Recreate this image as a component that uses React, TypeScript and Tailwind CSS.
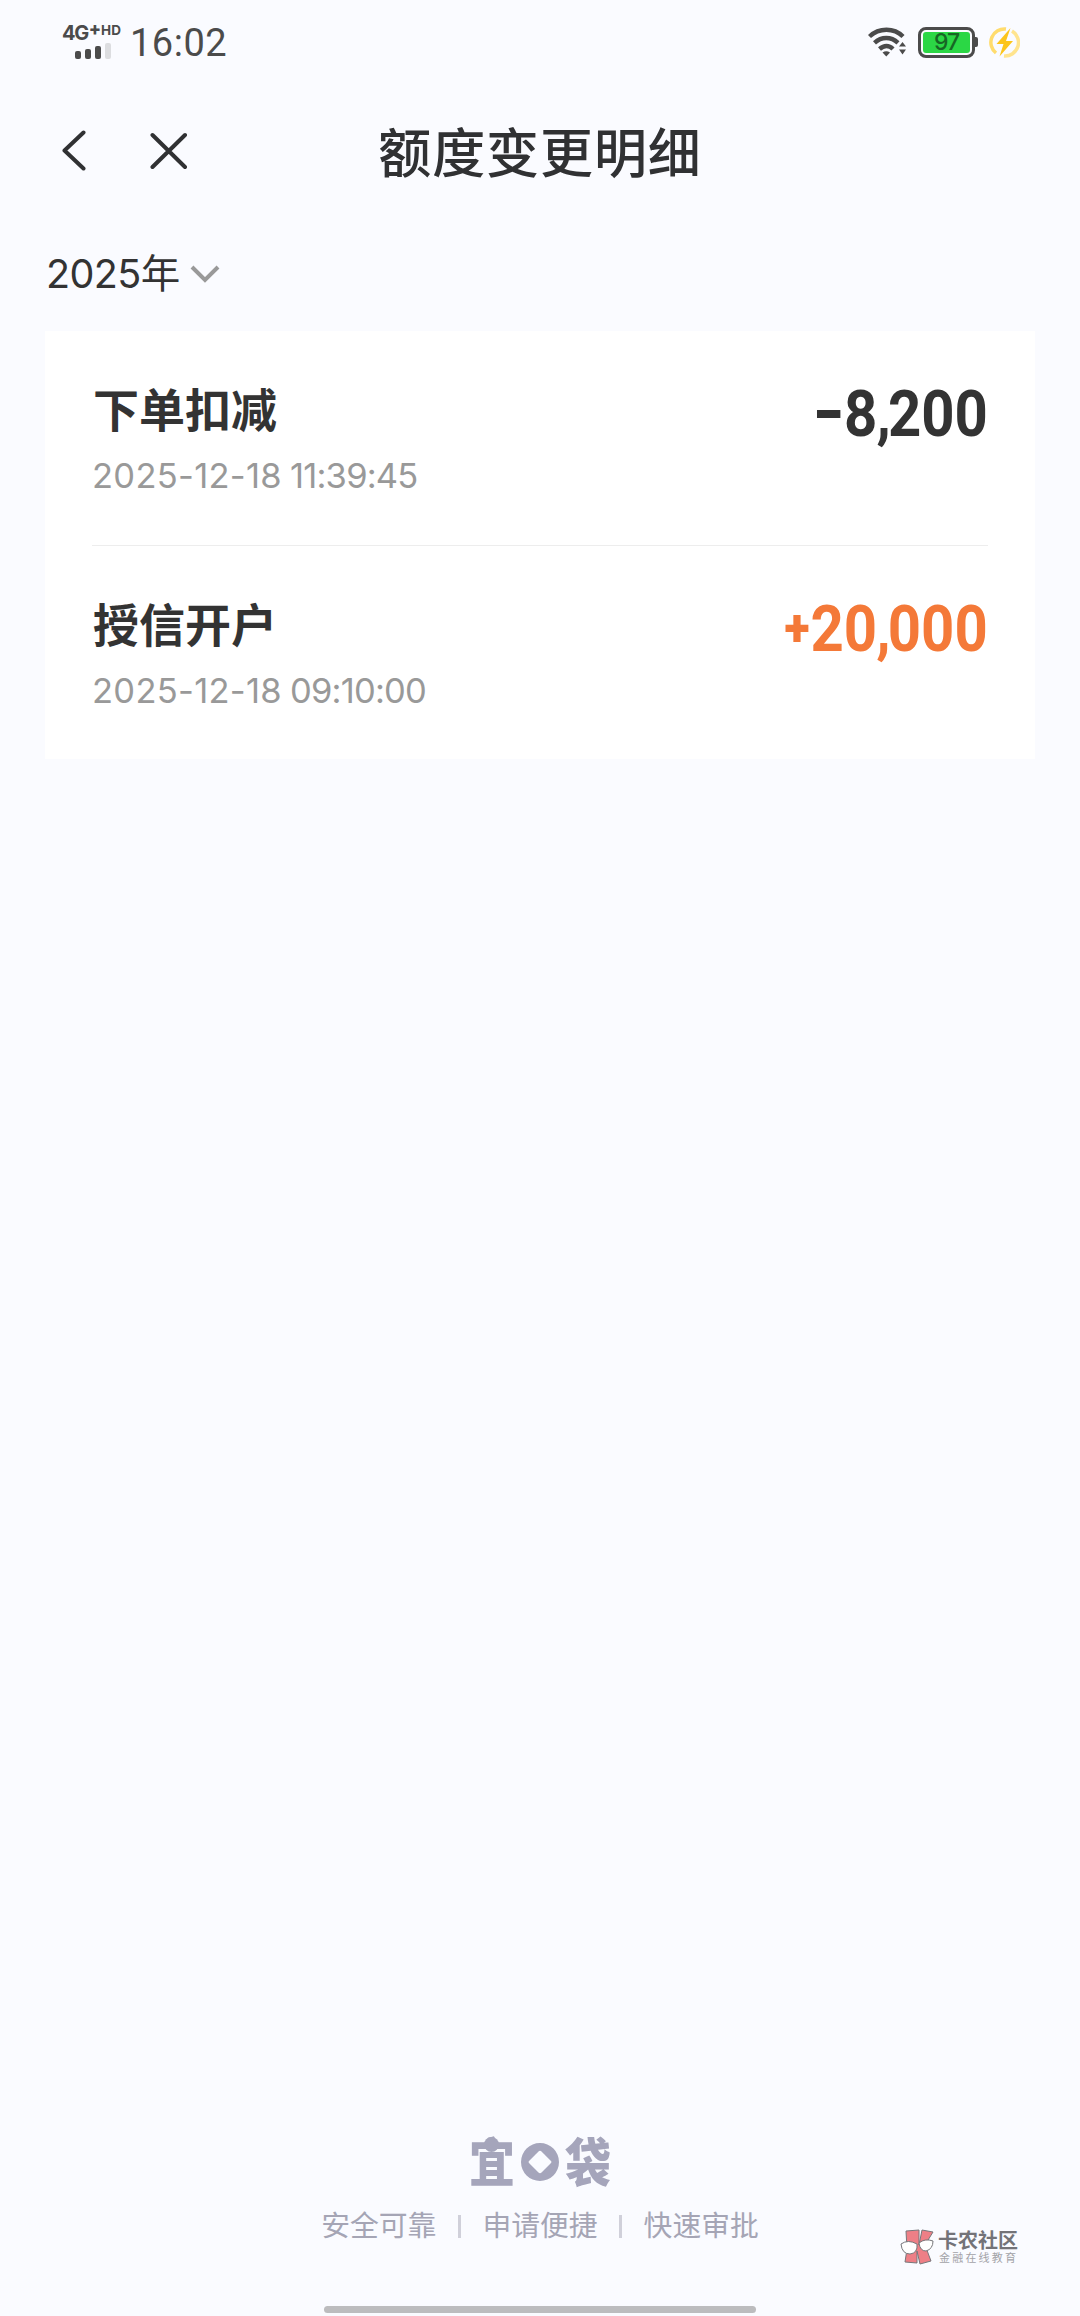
// Credit limit history — mobile page with status bar, record card and brand footer.

type LimitRecord = {
  title: string;
  date: string;
  time: string;
  sign: "-" | "+";
  amount: string;
};

const records: LimitRecord[] = [
  { title: "下单扣减", date: "2025-12-18", time: "11:39:45", sign: "-", amount: "8,200" },
  { title: "授信开户", date: "2025-12-18", time: "09:10:00", sign: "+", amount: "20,000" },
];

const slogans = ["安全可靠", "申请便捷", "快速审批"];

function WifiIcon() {
  return (
    <svg className="h-[30px] w-[40px]" viewBox="0 0 40 30" fill="none" aria-hidden="true">
      <g stroke="#4b4b4b" strokeWidth="4.4">
        <path d="M1.5 9.5C11 0.5 26 0.5 35 9.5" />
        <path d="M6.5 15.8C13.5 9.3 23 9.3 30 15.8" />
        <path d="M11.5 22C16 18 21 18 25 22" />
      </g>
      <path d="M14.5 25.5Q18.3 23 22 25.5L18.3 29.5Z" fill="#4b4b4b" />
      <path d="M31 19.5L34.5 15L38 19.5ZM31 22.5L34.5 27.5L38 22.5Z" fill="#4b4b4b" />
    </svg>
  );
}

function StatusBar() {
  return (
    <div className="flex h-[84px] items-center justify-between pl-[62px] pr-[60px] text-[#4b4b4b]">
      <div className="flex items-center">
        <div className="mb-[4px] flex h-[34px] w-[60px] flex-col">
          <div className="flex items-start whitespace-nowrap font-bold leading-none">
            <span className="text-[20px] leading-[20px] tracking-[-1.4px]">4G</span>
            <span className="ml-[1px] text-[18px] font-extrabold leading-[12px] tracking-[-1px]">+</span>
            <span className="ml-[1px] text-[13.5px] leading-[15px]">HD</span>
          </div>
          <div className="flex h-[16px] items-end gap-[4px] pl-[13px]">
            <i className="h-[8px] w-[6px] rounded-[2px] bg-[#4b4b4b]" />
            <i className="h-[10px] w-[6px] rounded-[2px] bg-[#4b4b4b]" />
            <i className="h-[13px] w-[6px] rounded-[2px] bg-[#4b4b4b]" />
            <i className="h-[16px] w-[6px] rounded-[2px] bg-[#dcdde0]" />
          </div>
        </div>
        <span className="ml-[8px] mt-[1px] text-[38px] leading-[42px] tracking-[0.5px] [font-family:Roboto,sans-serif]">16:02</span>
      </div>
      <div className="flex items-center">
        <WifiIcon />
        <div className="ml-[10px] flex h-[31px] w-[57px] items-center justify-center rounded-[8px] border-[3px] border-[#4b4b4b] p-[2px]">
          <div className="flex h-full w-full items-center justify-center rounded-[3px] bg-[#2bd745] text-[23px] font-medium leading-none tracking-[-1px] text-[#176624]">
            97
          </div>
        </div>
        <i className="h-[10px] w-[3px] rounded-r-[2px] bg-[#4b4b4b]" />
        <svg className="ml-[11px] h-[31px] w-[31px]" viewBox="0 0 31 31" fill="none" aria-hidden="true">
          <path d="M17 2A13.5 13.5 0 0 0 7 26" stroke="#ffdc6e" strokeWidth="3.5" />
          <path d="M23 4A13.5 13.5 0 0 1 15 29" stroke="#ffe48e" strokeWidth="3.5" />
          <path d="M21.5 1L7.5 17H14.5L10.5 29.5L24 14H17Z" fill="#fcc51c" />
        </svg>
      </div>
    </div>
  );
}

function NavBar() {
  return (
    <header className="grid h-[140px] grid-cols-[1fr_auto_1fr] items-center px-[60px] text-[#303133]">
      <div className="mb-[6px] flex items-center gap-[64px]">
        <svg className="h-[44px] w-[26px]" viewBox="0 0 26 44" fill="none" stroke="currentColor" strokeWidth="4" strokeLinecap="round" strokeLinejoin="round" aria-label="返回">
          <path d="M23.5 3.5L4.5 21.5L23.5 39.5" />
        </svg>
        <svg className="h-[44px] w-[38px]" viewBox="0 0 38 44" fill="none" stroke="currentColor" strokeWidth="4" strokeLinecap="round" aria-label="关闭">
          <path d="M2.5 6L35 38M35 6L2.5 38" />
        </svg>
      </div>
      <h1 className="text-[53px] font-medium leading-[64px] tracking-[0.9px]">额度变更明细</h1>
    </header>
  );
}

function RecordRow({ record }: { record: LimitRecord }) {
  const color = record.sign === "+" ? "text-[#f47938]" : "text-[#333333]";
  const [thousands, rest] = record.amount.split(",");
  return (
    <li className="flex h-[215px] justify-between border-b border-[#ededed] pt-[51px] last:border-b-0">
      <div className="flex flex-col">
        <span className="pl-[1px] text-[46px] font-bold leading-[56px] text-[#333333]">{record.title}</span>
        <span className="mt-[17px] flex gap-[8px] whitespace-nowrap text-[34.5px] leading-[42px] text-[#999999]">
          <span className="tracking-[0.3px]">{record.date}</span>
          <span className="tracking-[-0.8px]">{record.time}</span>
        </span>
      </div>
      <div className={`flex h-[64px] origin-right scale-x-90 items-center font-bold leading-none [font-family:Roboto,sans-serif] ${color}`}>
        {record.sign === "-" ? (
          <i className="mr-[4px] h-[8px] w-[26px] bg-current" aria-label="-" />
        ) : (
          <span className="mr-[1px] text-[52px] font-black">+</span>
        )}
        <span className="text-[64.5px]">
          {thousands}
          <span className="-ml-[1px] -mr-[3px]">,</span>
          {rest}
        </span>
      </div>
    </li>
  );
}

function Brand() {
  return (
    <div className="flex h-[54px] items-center justify-center gap-[6px] text-[46px] font-black leading-[54px] text-[#a5a5bb]">
      <span className="relative top-[2px]">
        <span className="inline-block scale-y-[1.13]">宜</span>
        <i className="absolute left-[15px] top-[1px] h-[15px] w-[15px] rounded-full bg-current" />
      </span>
      <svg className="mt-[1px] h-[38px] w-[38px]" viewBox="0 0 38 38" aria-hidden="true">
        <path fill="currentColor" fillRule="evenodd" d="M19 0A19 19 0 1 1 19 38A19 19 0 1 1 19 0ZM17.5 8.5L8 18Q7 19 8 20L17.5 29.5Q19 31 20.5 29.5L30 20Q31 19 30 18L20.5 8.5Q19 7 17.5 8.5Z" />
      </svg>
      <span className="mt-[4px] inline-block scale-y-[1.13]">袋</span>
    </div>
  );
}

function CommunityMark() {
  return (
    <div className="absolute left-[900px] top-[2228px] flex items-center gap-[4px]">
      <svg className="h-[36px] w-[34px]" viewBox="0 0 34 36" stroke="#77777b" strokeWidth="1" aria-hidden="true">
        <path d="M6 2L19 1V16L22 1L33 3L25 16L31 32L20 35L17 22V34L5 33L7 20Z" fill="#ee7f86" />
        <path d="M1 15Q8 10 17 15Q18 24 10 25Q2 25 1 15Z" fill="#fff" />
        <path d="M19 14Q25 9 33 12Q33 20 26 22Q20 22 19 14Z" fill="#fff" />
      </svg>
      <div className="flex flex-col whitespace-nowrap pt-[2px]">
        <span className="text-[20px] font-bold leading-[22px] text-[#737378]">卡农社区</span>
        <span className="pl-[1px] text-[11px] leading-[13px] tracking-[2.2px] text-[#a3a3a8]">金融在线教育</span>
      </div>
    </div>
  );
}

export default function App() {
  return (
    <div className="relative flex h-[2316px] w-[1080px] flex-col overflow-hidden bg-[#fafbff] [font-family:Inter,'Noto_Sans_CJK_SC',sans-serif]">
      <StatusBar />
      <NavBar />
      <button className="flex h-[98px] items-center pl-[46px] pt-[1px] text-left text-[#333333]">
        <span className="text-[39.5px] leading-[50px] tracking-[-0.6px]">2025年</span>
        <svg className="ml-[10px] h-[18px] w-[30px]" viewBox="0 0 30 18" fill="none" stroke="#999999" strokeWidth="4" aria-hidden="true">
          <path d="M2 2L15 15L28 2" />
        </svg>
      </button>
      <ul className="mx-[45px] mt-[9px] h-[428px] bg-white px-[47px]">
        {records.map((r) => (
          <RecordRow key={r.time} record={r} />
        ))}
      </ul>

      <footer className="mt-auto flex flex-col items-center pb-[3px]">
        <Brand />
        <div className="mt-[18px] flex items-center text-[28.8px] leading-[40px] text-[#a5a5b5]">
          {slogans.map((s, i) => (
            <span key={s} className="flex items-center">
              {i > 0 && <i className="mx-[21.5px] h-[23px] w-[3px] bg-[#d0d0da]" />}
              {s}
            </span>
          ))}
        </div>
        <div className="mt-[60px] h-[7px] w-[432px] rounded-full bg-[#bcbcbe]" />
      </footer>
      <CommunityMark />
    </div>
  );
}
